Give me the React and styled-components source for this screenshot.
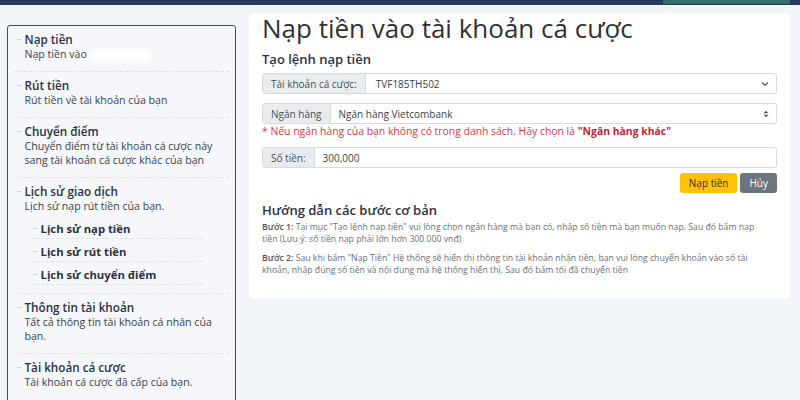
import React from 'react';
import styled, { createGlobalStyle } from 'styled-components';

const GlobalStyle = createGlobalStyle`
    *, *::before, *::after {
        box-sizing: border-box;
    }
    html, body {
        margin: 0;
        padding: 0;
        background: #f1f4f9;
        font-family: "Open Sans", "Noto Sans", sans-serif;
        color: #2f3540;
        overflow: hidden;
    }
`;

const TopBar = styled.div`
    height: 5px;
    background: #27395c;
    display: flex;
    justify-content: flex-end;
    padding-right: 10px;
`;

const TopAccent = styled.div`
    width: 127px;
    height: 4px;
    background: #2f6f6a;
`;

const Page = styled.div`
    display: flex;
    align-items: flex-start;
    gap: 13px;
    padding: 8px 10px 0 7px;
    height: 395px;
    overflow: hidden;
`;

const Sidebar = styled.div`
    width: 229px;
    flex-shrink: 0;
    margin-top: 12px;
    border: 1.5px solid #3b4f5e;
    border-radius: 3px;
    background: #f5f7fa;
    padding: 0 6px 40px 5.5px;
`;

const Item = styled.div`
    position: relative;
    padding: ${p => p.$sub ? '5px 0 2px 10px' : '5px 13px 10px 11px'};
    margin: ${p => p.$sub ? '0 13px 0 6px' : '0'};
    border-bottom: 1px dashed ${p => p.$last ? 'transparent' : '#dde2e8'};
    &::before {
        content: '';
        position: absolute;
        left: ${p => p.$sub ? '2px' : '3px'};
        top: ${p => p.$sub ? '12px' : '13px'};
        width: 4px;
        height: 1px;
        background: #c8ced6;
    }
`;

const ItemTitle = styled.div`
    font-size: 11.7px;
    font-weight: 600;
    color: #2b3340;
    line-height: 16px;
`;

const SubTitle = styled.div`
    font-size: 11.3px;
    font-weight: 700;
    color: #2b3340;
    line-height: 15px;
`;

const ItemDesc = styled.div`
    font-size: 10.6px;
    color: #3b434d;
    line-height: 14px;
`;

const Blur = styled.span`
    display: inline-block;
    width: 60px;
    height: 11px;
    margin-left: 4px;
    vertical-align: middle;
    background: #ffffff;
    border-radius: 6px;
    filter: blur(2px);
`;

const SubList = styled.div`
    padding-top: 3px;
    margin-bottom: -2px;
`;

const Card = styled.div`
    flex: 1;
    background: #ffffff;
    border-radius: 4px;
    padding: 0 13px 16px 13px;
`;

const Title = styled.h1`
    margin: 0;
    font-size: 26px;
    font-weight: 400;
    color: #2e3238;
    line-height: 30px;
`;

const Heading = styled.h3`
    margin: 7px 0 5px;
    font-size: 13px;
    font-weight: 600;
    color: #2b3340;
    line-height: 18px;
`;

const Group = styled.div`
    display: flex;
    height: 21px;
    border: 1px solid #d6dbe0;
    border-radius: 3px;
    margin-top: ${p => p.$mt || 0}px;
    font-size: 10px;
    overflow: hidden;
`;

const Addon = styled.div`
    display: flex;
    align-items: center;
    padding: 0 8px;
    background: #e9ecef;
    border-right: 1px solid #d6dbe0;
    color: #4a5058;
    white-space: nowrap;
`;

const Field = styled.div`
    flex: 1;
    display: flex;
    align-items: center;
    justify-content: space-between;
    padding: 0 7px 0 ${p => p.$pl || 10}px;
    color: #3a3f46;
`;

const Note = styled.div`
    margin-top: 1px;
    font-size: 10.4px;
    color: #d8394a;
    line-height: 13px;
    b { font-weight: 700; color: #c82338; }
`;

const Actions = styled.div`
    display: flex;
    justify-content: flex-end;
    gap: 3px;
    margin-top: 5px;
`;

const Button = styled.div`
    height: 20px;
    padding: 0 ${p => p.$px}px;
    display: flex;
    align-items: center;
    border-radius: 3px;
    font-size: 10px;
    background: ${p => p.$bg};
    color: ${p => p.$color};
`;

const GuideHeading = styled.h3`
    margin: 8px 0 2px;
    font-size: 13px;
    font-weight: 600;
    color: #2b3340;
    line-height: 18px;
`;

const Step = styled.p`
    margin: 0 0 7px;
    max-width: 500px;
    font-size: 8.7px;
    line-height: 12px;
    color: #6a6f76;
    b { font-weight: 600; color: #50555c; }
`;

const Chevron = () => (
    <svg width="8" height="6" viewBox="0 0 8 6">
        <path d="M1 1.5 L4 4.5 L7 1.5" fill="none" stroke="#555" strokeWidth="1.2" />
    </svg>
);

const UpDown = () => (
    <svg width="6" height="8" viewBox="0 0 6 8">
        <path d="M0.5 3.2 L3 0.8 L5.5 3.2 Z M0.5 4.8 L3 7.2 L5.5 4.8 Z" fill="#555" />
    </svg>
);

export default function App() {
    return (
        <>
            <GlobalStyle/>
            <TopBar><TopAccent/></TopBar>
            <Page>
                <Sidebar>
                    <Item>
                        <ItemTitle>Nạp tiền</ItemTitle>
                        <ItemDesc>Nạp tiền vào<Blur/></ItemDesc>
                    </Item>
                    <Item>
                        <ItemTitle>Rút tiền</ItemTitle>
                        <ItemDesc>Rút tiền về tài khoản của bạn</ItemDesc>
                    </Item>
                    <Item>
                        <ItemTitle>Chuyển điểm</ItemTitle>
                        <ItemDesc>Chuyển điểm từ tài khoản cá cược này sang tài khoản cá cược khác của bạn</ItemDesc>
                    </Item>
                    <Item>
                        <ItemTitle>Lịch sử giao dịch</ItemTitle>
                        <ItemDesc>Lịch sử nạp rút tiền của bạn.</ItemDesc>
                        <SubList>
                            <Item $sub><SubTitle>Lịch sử nạp tiền</SubTitle></Item>
                            <Item $sub><SubTitle>Lịch sử rút tiền</SubTitle></Item>
                            <Item $sub><SubTitle>Lịch sử chuyển điểm</SubTitle></Item>
                        </SubList>
                    </Item>
                    <Item>
                        <ItemTitle>Thông tin tài khoản</ItemTitle>
                        <ItemDesc>Tất cả thông tin tài khoản cá nhân của bạn.</ItemDesc>
                    </Item>
                    <Item $last>
                        <ItemTitle>Tài khoản cá cược</ItemTitle>
                        <ItemDesc>Tài khoản cá cược đã cấp của bạn.</ItemDesc>
                        <SubList>
                            <Item $sub $last><SubTitle>Danh sách tài khoản</SubTitle></Item>
                        </SubList>
                    </Item>
                </Sidebar>
                <Card>
                    <Title>Nạp tiền vào tài khoản cá cược</Title>
                    <Heading>Tạo lệnh nạp tiền</Heading>
                    <Group>
                        <Addon>Tài khoản cá cược:</Addon>
                        <Field $pl={10}>TVF185TH502<Chevron/></Field>
                    </Group>
                    <Group $mt={9}>
                        <Addon>Ngân hàng</Addon>
                        <Field $pl={8}>Ngân hàng Vietcombank<UpDown/></Field>
                    </Group>
                    <Note>* Nếu ngân hàng của bạn không có trong danh sách. Hãy chọn là <b>"Ngân hàng khác"</b></Note>
                    <Group $mt={9}>
                        <Addon>Số tiền:</Addon>
                        <Field $pl={8}>300,000</Field>
                    </Group>
                    <Actions>
                        <Button $bg="#ffc107" $color="#3a3320" $px={9}>Nạp tiền</Button>
                        <Button $bg="#6c757d" $color="#ffffff" $px={9}>Hủy</Button>
                    </Actions>
                    <GuideHeading>Hướng dẫn các bước cơ bản</GuideHeading>
                    <Step><b>Bước 1:</b> Tại mục "Tạo lệnh nạp tiền" vui lòng chọn ngân hàng mà bạn có, nhập số tiền mà bạn muốn nạp. Sau đó bấm nạp tiền (Lưu ý: số tiền nạp phải lớn hơn 300.000 vnđ)</Step>
                    <Step><b>Bước 2:</b> Sau khi bấm "Nạp Tiền" Hệ thống sẽ hiển thị thông tin tài khoản nhận tiền, bạn vui lòng chuyển khoản vào số tài khoản, nhập đúng số tiền và nội dung mà hệ thống hiển thị. Sau đó bấm tôi đã chuyển tiền</Step>
                </Card>
            </Page>
        </>
    );
}
